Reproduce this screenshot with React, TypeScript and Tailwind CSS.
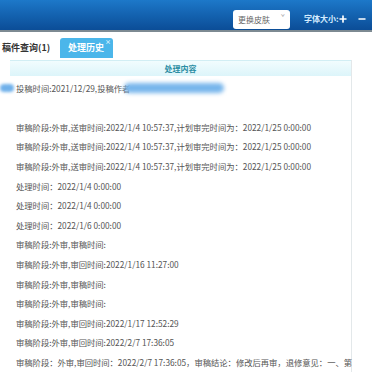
import React from "react";
import { Plus, Minus } from "lucide-react";

const rows: string[] = [
  "",
  "审稿阶段:外审,送审时间:2022/1/4 10:57:37,计划审完时间为：2022/1/25 0:00:00",
  "审稿阶段:外审,送审时间:2022/1/4 10:57:37,计划审完时间为：2022/1/25 0:00:00",
  "审稿阶段:外审,送审时间:2022/1/4 10:57:37,计划审完时间为：2022/1/25 0:00:00",
  "处理时间：2022/1/4 0:00:00",
  "处理时间：2022/1/4 0:00:00",
  "处理时间：2022/1/6 0:00:00",
  "审稿阶段:外审,审稿时间:",
  "审稿阶段:外审,审回时间:2022/1/16 11:27:00",
  "审稿阶段:外审,审稿时间:",
  "审稿阶段:外审,审稿时间:",
  "审稿阶段:外审,审回时间:2022/1/17 12:52:29",
  "审稿阶段:外审,审回时间:2022/2/7 17:36:05",
  "审稿阶段：外审,审回时间：2022/2/7 17:36:05，审稿结论：修改后再审，退修意见：一、第",
];

const App: React.FC = () => {
  return (
    <div
      className="w-[372px] h-[372px] overflow-hidden bg-white"
      style={{ fontFamily: '"Noto Sans CJK SC", "Noto Sans", sans-serif' }}
    >
      {/* Top bar */}
      <div className="h-[30px] bg-gradient-to-b from-[#1d78c9] to-[#0b4d97] flex items-center pl-[233px] pt-[8px]">
        <div className="w-[57px] h-[19px] shrink-0 bg-white rounded-[3px] flex items-start justify-between px-[5px] pt-[3px] text-[8px] text-[#666]">
          <span className="leading-[13px]">更换皮肤</span>
          <span className="text-[7px] leading-[8px] text-[#999]">ˇ</span>
        </div>
        <span className="ml-[14px] w-[34px] shrink-0 text-[8px] font-bold text-[#d4ecff] leading-none whitespace-nowrap">字体大小:</span>
        <Plus className="w-[10px] h-[10px] text-white shrink-0" strokeWidth={4} />
        <Minus className="ml-[9px] w-[10px] h-[10px] text-white shrink-0" strokeWidth={4} />
      </div>
      <div className="h-[2px] bg-[#7d8a92]" />

      {/* Tabs */}
      <div className="flex items-end h-[26px] pl-[2px]">
        <div className="h-[20px] w-[52px] flex items-center text-[9px] font-bold text-[#333]">
          稿件查询(1)
        </div>
        <div className="ml-[6px] h-[20px] w-[53px] bg-[#4bb6ea] rounded-t-[3px] flex items-center pl-[8px] text-[9px] font-bold text-white relative">
          处理历史
          <span className="absolute right-[2px] top-[1px] text-[6px] leading-none text-[#d8f1ff]">×</span>
        </div>
      </div>

      {/* Table */}
      <div className="ml-[10px] w-[342px] border-r border-[#e3e8ea] mt-[2px]">
        <div className="h-[16px] bg-gradient-to-b from-[#f2fcfe] to-[#dcf5fa] border-t border-[#d2eef4] flex items-center justify-center text-[8px] font-bold text-[#2c8ea4]">
          处理内容
        </div>
        <div className="h-[2px]" />
        <div className="h-[19.6px] flex items-center text-[8.3px] text-[#555] whitespace-nowrap -ml-[10px]">
          <span className="inline-block w-[14px] h-[8px] rounded-full bg-[#6fb0ea] blur-[1.5px]" />
          <span className="ml-[2px]">投稿时间:2021/12/29,投稿作者</span>
          <span className="-ml-[6px] inline-block w-[100px] h-[10px] rounded-full bg-[#78b6ec] blur-[2px]" />
        </div>
        {rows.map((r, i) => (
          <div
            key={i}
            className="h-[19.6px] flex items-center pl-[6px] text-[8.3px] text-[#555] whitespace-nowrap"
          >
            {r}
          </div>
        ))}
      </div>
    </div>
  );
};

export default App;
